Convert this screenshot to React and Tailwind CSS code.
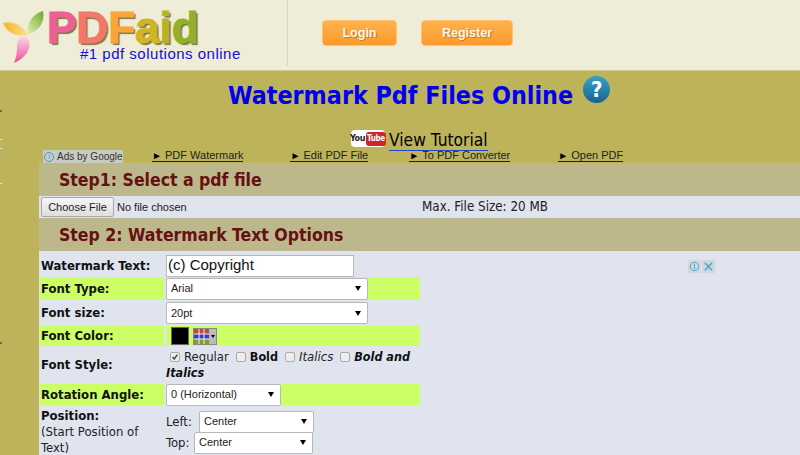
import React from 'react';

const cond = "font-['DejaVu_Sans_Condensed','DejaVu_Sans',sans-serif]";
const arial = "font-['Liberation_Sans',Arial,sans-serif]";

const NavLink = ({ children, className }) => (
    <a className={`${arial} flex h-[12px] items-center whitespace-nowrap border-b border-[#222] text-[11px] leading-[11px] text-[#222] ${className}`}>
        <span className="w-[13px] text-[10px] leading-none text-black">►</span>{children}
    </a>
);

const Select = ({ value, className }) => (
    <div className={`${arial} flex h-[22px] items-center justify-between rounded-[2px] border border-[#b8b8b8] bg-white pl-[4px] pr-[6px] text-[11px] text-[#222] ${className}`}>
        <span>{value}</span>
        <span className="h-0 w-0 border-x-[3.5px] border-t-[5px] border-x-transparent border-t-black"></span>
    </div>
);

const Check = ({ checked }) => (
    <span className="mr-[4px] flex h-[10px] w-[10px] shrink-0 items-center justify-center rounded-[2px] border border-[#aaa] bg-[#eee]">
        {checked && (
            <svg viewBox="0 0 10 10" className="h-[10px] w-[10px]">
                <path d="M2 5l2 2.5L8 2" fill="none" stroke="#444" strokeWidth="1.8" />
            </svg>
        )}
    </span>
);

const Row = ({ label, green, className, children }) => (
    <div className={`flex w-[380px] ${className}`}>
        <div className={`flex w-[124px] items-center pl-px text-[13px] font-bold text-[#111] ${green ? 'bg-[#ccff66]' : ''}`}>{label}</div>
        <div className={`ml-[2px] flex flex-1 items-center ${green ? 'bg-[#ccff66]' : ''}`}>{children}</div>
    </div>
);

const Logo = () => (
    <div className="flex h-[71px] w-[287px] shrink-0">
        <svg viewBox="0 0 46 66" className="h-[66px] w-[46px] shrink-0">
            <defs>
                <linearGradient id="leafY" x1="0" x2="1" y1="0" y2="0">
                    <stop offset="0" stopColor="#f6b42a" />
                    <stop offset="1" stopColor="#fbe08a" />
                </linearGradient>
                <linearGradient id="leafG" x1="1" x2="0" y1="0" y2="1">
                    <stop offset="0" stopColor="#6fa828" />
                    <stop offset="1" stopColor="#e2efb0" />
                </linearGradient>
                <linearGradient id="leafP" x1="0" x2="0" y1="0" y2="1">
                    <stop offset="0" stopColor="#fbd3e6" />
                    <stop offset="1" stopColor="#ec4f98" />
                </linearGradient>
            </defs>
            <path d="M3 23c9-3 20 2 25 12-9 2-21-1-25-12z" fill="url(#leafY)" />
            <path d="M43 11c2 10-3 20-15 23-2-10 4-20 15-23z" fill="url(#leafG)" />
            <path d="M21 37c7-1 10 4 8 11-2 7-8 12-15 15 2-5 3-10 3-16 0-5 1-9 4-10z" fill="url(#leafP)" />
        </svg>
        <div className="ml-px flex flex-col">
            <div className={`${arial} mt-[10px] flex h-[36px] text-[44px] font-bold leading-[36px] [-webkit-text-stroke:1px_currentColor] [text-shadow:2px_2px_1px_#77774a]`}>
                <span className="block text-[#ee5f96]">P</span>
                <span className="block text-[#f4786a]">D</span>
                <span className="block text-[#f9a53a]">F</span>
                <span className="block text-[#d2b522]">a</span>
                <span className="block text-[#b6b426]">i</span>
                <span className="block text-[#93b02a]">d</span>
            </div>
            <div className={`${arial} ml-[33px] whitespace-nowrap text-[15px] leading-[16px] tracking-[0.5px] text-[#1010d8]`}>#1 pdf solutions online</div>
        </div>
    </div>
);

const HeaderButton = ({ children, className }) => (
    <button className={`${arial} flex h-[26px] items-center justify-center rounded-[4px] border border-[#ffc070] bg-gradient-to-b from-[#ffb14c] to-[#fb9a28] text-[12.5px] font-bold text-[#fff6e4] [text-shadow:1px_1px_1px_#b87a30] ${className}`}>
        {children}
    </button>
);

export default function App() {
    return (
        <div className={`${cond} relative h-[455px] w-[800px] overflow-hidden bg-[#bdb35a]`}>
            {/* stray bits at the left edge of the page */}
            <span className="absolute left-0 top-[110px] h-[2px] w-[2px] bg-[#6a6440]"></span>
            <span className="absolute left-0 top-[139px] h-px w-[2px] bg-[#e0e4ef]"></span>
            <span className="absolute left-0 top-[148px] h-px w-[2px] bg-[#e0e4ef]"></span>
            <span className="absolute left-0 top-[183px] h-px w-[2px] bg-[#e0e4ef]"></span>
            <span className="absolute left-0 top-[342px] h-[2px] w-[2px] bg-[#6a6440]"></span>

            <div className="flex h-[71px] items-start border-b border-[#cfc98f] bg-[#efecd8]">
                <Logo />
                <div className="h-[66px] w-px bg-[#d8d5bd]"></div>
                <div className="ml-[34px] mt-[20px] flex gap-[24px]">
                    <HeaderButton className="w-[75px]">Login</HeaderButton>
                    <HeaderButton className="w-[92px]">Register</HeaderButton>
                </div>
            </div>

            <div className="flex h-[53px] items-start pl-[228px] pt-[8px]">
                <h1 className="whitespace-nowrap text-[24.8px] font-bold leading-[34px] text-[#0000ee]">Watermark Pdf Files Online</h1>
                <div className="ml-[10px] mt-[-3px] flex h-[27px] w-[27px] items-center justify-center rounded-full bg-gradient-to-b from-[#3aa0c8] to-[#14668f] text-[22px] font-bold leading-none text-white">?</div>
            </div>

            <div className="flex h-[26px] items-start pl-[351px] pt-[6px]">
                <div className="flex h-[17px] w-[34px] items-center justify-center rounded-[4px] bg-white">
                    <span className={`${cond} text-[9px] font-bold leading-none tracking-[-0.5px] text-[#222]`}>You</span>
                    <span className={`${cond} ml-px rounded-[3px] bg-[#d0262a] px-px text-[8px] font-bold leading-[14px] tracking-[-0.3px] text-white`}>Tube</span>
                </div>
                <a className="ml-[4px] mt-px border-b border-[#2244cc] text-[17.3px] leading-[19px] text-black">View Tutorial</a>
            </div>

            <div className="flex h-[13px] items-start">
                <div className={`${arial} ml-[43px] flex h-[13px] w-[80px] items-center gap-[3px] bg-[#c8ccc0] pl-px text-[10px] leading-none text-[#333]`}>
                    <span className="flex h-[10px] w-[10px] items-center justify-center rounded-full border border-[#3a9ad9] text-[7px] leading-none text-[#3a9ad9]">i</span>
                    Ads by Google
                </div>
                <NavLink className="ml-[29px]">PDF Watermark</NavLink>
                <NavLink className="ml-[47px]">Edit PDF File</NavLink>
                <NavLink className="ml-[41px]">To PDF Converter</NavLink>
                <NavLink className="ml-[48px]">Open PDF</NavLink>
            </div>

            <div className="ml-[39px] bg-[#e0e4ef]">
                <div className="flex h-[33px] items-center bg-[#bdb88c] pl-[20px] pt-px text-[17.5px] font-bold text-[#661111]">Step1: Select a pdf file</div>
                <div className="flex h-[22px] items-center">
                    <button className={`${arial} ml-[2px] h-[20px] w-[73px] rounded-[2px] border border-[#a8a8a8] bg-gradient-to-b from-[#f6f6f6] to-[#dedede] text-[11px] text-[#222]`}>Choose File</button>
                    <span className={`${arial} ml-[3px] w-[305px] text-[11px] text-[#222]`}>No file chosen</span>
                    <span className="text-[13.3px] text-[#222]">Max. File Size: 20 MB</span>
                </div>
                <div className="flex h-[33px] items-center bg-[#bdb88c] pl-[20px] pt-px text-[17.5px] font-bold text-[#661111]">Step 2: Watermark Text Options</div>

                <div className="relative pl-px pt-[3px]">
                    <div className="absolute left-[649px] top-[9px] flex gap-px">
                        <span className="flex h-[13px] w-[13px] items-center justify-center bg-[#d4d6dc] text-[#3aa8dc]">
                            <svg viewBox="0 0 12 12" className="h-[11px] w-[11px]"><circle cx="6" cy="6" r="4.6" fill="none" stroke="currentColor" /><path d="M6 3v6" stroke="currentColor" /></svg>
                        </span>
                        <span className="flex h-[13px] w-[13px] items-center justify-center bg-[#d4d6dc] text-[#3aa8dc]">
                            <svg viewBox="0 0 12 12" className="h-[11px] w-[11px]"><path d="M2 2l8 8M10 2l-8 8" stroke="currentColor" strokeWidth="1.5" /></svg>
                        </span>
                    </div>

                    <Row label="Watermark Text:" className="h-[23px]">
                        <div className={`${arial} flex h-[22px] w-[188px] items-center border border-[#b8b8b8] bg-white pl-px text-[15px] text-[#111]`}>(c) Copyright</div>
                    </Row>
                    <Row label="Font Type:" green className="h-[23px]">
                        <Select value="Arial" className="w-[202px]" />
                    </Row>
                    <Row label="Font size:" className="h-[26px]">
                        <Select value="20pt" className="w-[202px]" />
                    </Row>
                    <Row label="Font Color:" green className="h-[20px]">
                        <span className="ml-[5px] h-[18px] w-[18px] border border-[#666] bg-black"></span>
                        <span className="ml-[4px] flex h-[17px] w-[24px] border border-[#888] bg-[#eee]">
                            <svg viewBox="0 0 15 15" className="h-[15px] w-[15px]">
                                <rect width="15" height="5" fill="#c8453a" />
                                <rect y="5" width="15" height="5" fill="#3a3ad0" />
                                <rect y="10" width="15" height="5" fill="#8a9a2a" />
                                <path d="M5 0v15M10 0v15M0 5h15M0 10h15" stroke="#eee" />
                            </svg>
                            <span className="flex flex-1 items-center justify-center bg-[#bbb]">
                                <span className="h-0 w-0 border-x-[2.5px] border-t-[3px] border-x-transparent border-t-black"></span>
                            </span>
                        </span>
                    </Row>
                    <Row label="Font Style:" className="h-[38px]">
                        <div className="text-[13px] leading-[16px] text-[#222]">
                            <div className="flex items-center whitespace-nowrap">
                                <span className="ml-[4px] flex items-center"><Check checked />Regular</span>
                                <span className="ml-[7px] flex items-center"><Check /><b className="text-[12.5px] text-[#111]">Bold</b></span>
                                <span className="ml-[7px] flex items-center"><Check /><i>Italics</i></span>
                                <span className="ml-[7px] flex items-center"><Check /><b className="text-[12.5px] italic text-[#111]">Bold and</b></span>
                            </div>
                            <b className="block text-[12.5px] italic text-[#111]">Italics</b>
                        </div>
                    </Row>
                    <Row label="Rotation Angle:" green className="h-[21px]">
                        <Select value="0 (Horizontal)" className="w-[115px]" />
                    </Row>
                    <div className="mt-[3px] flex w-[380px]">
                        <div className="w-[126px] pl-px text-[13px] leading-[16px] text-[#222]">
                            <b className="text-[#111]">Position:</b><br />(Start Position of Text)
                        </div>
                        <div className="pt-[3px] text-[13px] text-[#222]">
                            <div className="flex h-[21px] items-center"><span className="w-[33px]">Left:</span><Select value="Center" className="w-[115px]" /></div>
                            <div className="flex h-[21px] items-center"><span className="w-[28px]">Top:</span><Select value="Center" className="w-[119px]" /></div>
                        </div>
                    </div>
                </div>
            </div>
        </div>
    );
}
